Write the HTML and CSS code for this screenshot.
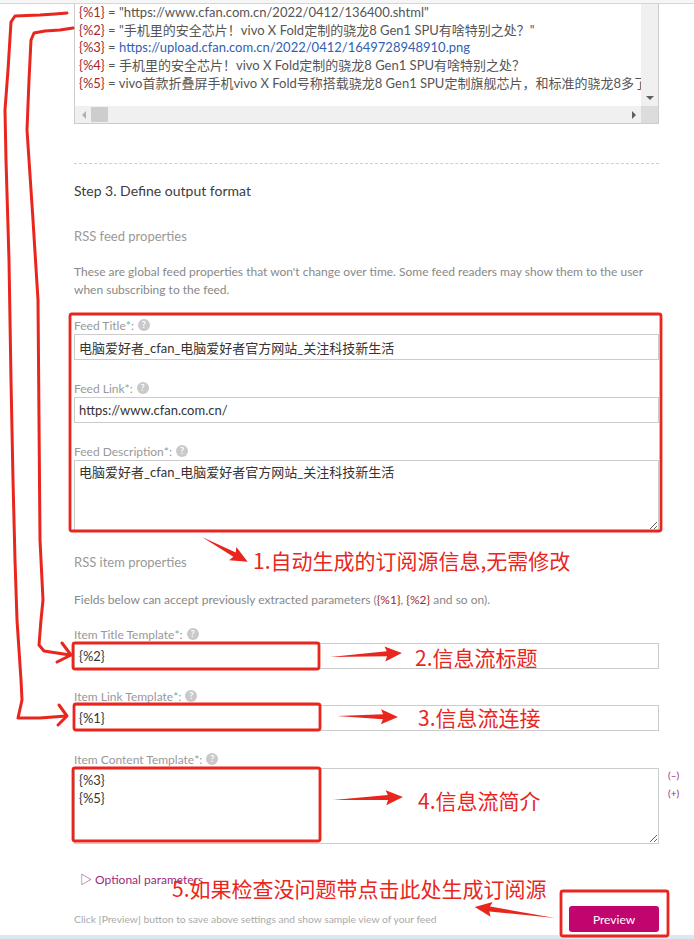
FILE: index.html
```html
<!DOCTYPE html>
<html>
<head>
  <title>Feed setup - Step 3</title>
  <link rel="stylesheet" href="styles.css">
</head>
<body>
  <div class="topbar"></div>

  <div class="wrap">
    <div class="params">
      <div class="params-view">
        <ul class="params-list">
          <li><span class="ph">{%1}</span> = "https://www.cfan.com.cn/2022/0412/136400.shtml"</li>
          <li><span class="ph">{%2}</span> = "手机里的安全芯片！vivo X Fold定制的骁龙8 Gen1 SPU有啥特别之处？"</li>
          <li><span class="ph">{%3}</span> = <a class="url" href="#">https://upload.cfan.com.cn/2022/0412/1649728948910.png</a></li>
          <li><span class="ph">{%4}</span> = 手机里的安全芯片！vivo X Fold定制的骁龙8 Gen1 SPU有啥特别之处？</li>
          <li><span class="ph">{%5}</span> = vivo首款折叠屏手机vivo X Fold号称搭载骁龙8 Gen1 SPU定制旗舰芯片，和标准的骁龙8多了一个SPU安全芯片</li>
        </ul>
      </div>
      <div class="vbar"><span class="tri tri-down"></span></div>
      <div class="hbar">
        <span class="tri tri-left"></span>
        <span class="thumb"></span>
        <span class="tri tri-right"></span>
      </div>
      <div class="corner"></div>
    </div>

    <hr class="sep">

    <h3 class="step">Step 3. Define output format</h3>

    <h4 class="sub">RSS feed properties</h4>
    <p class="note">These are global feed properties that won't change over time. Some feed readers may show them to the user when subscribing to the feed.</p>

    <div class="field first">
      <label class="lbl">Feed Title<span class="req">*</span>:<span class="help">?</span></label>
      <input class="txt" type="text" value="电脑爱好者_cfan_电脑爱好者官方网站_关注科技新生活">
    </div>
    <div class="field">
      <label class="lbl">Feed Link<span class="req">*</span>:<span class="help">?</span></label>
      <input class="txt" type="text" value="https://www.cfan.com.cn/">
    </div>
    <div class="field">
      <label class="lbl">Feed Description<span class="req">*</span>:<span class="help">?</span></label>
      <textarea class="area desc">电脑爱好者_cfan_电脑爱好者官方网站_关注科技新生活</textarea>
    </div>

    <h4 class="sub items">RSS item properties</h4>
    <p class="note tight">Fields below can accept previously extracted parameters (<span class="ph">{%1}</span>, <span class="ph">{%2}</span> and so on).</p>

    <div class="field item-first">
      <label class="lbl">Item Title Template<span class="req">*</span>:<span class="help">?</span></label>
      <input class="txt" type="text" value="{%2}">
    </div>
    <div class="field item-link">
      <label class="lbl">Item Link Template<span class="req">*</span>:<span class="help">?</span></label>
      <input class="txt" type="text" value="{%1}">
    </div>
    <div class="field">
      <label class="lbl">Item Content Template<span class="req">*</span>:<span class="help">?</span></label>
      <div class="tpl-row">
        <textarea class="area content">{%3}
{%5}</textarea>
        <div class="tpl-tools">
          <span>(–)</span>
          <span>(+)</span>
        </div>
      </div>
    </div>

    <div class="optional">&#9655; Optional parameters</div>

    <div class="actions">
      <span class="hint">Click [Preview] button to save above settings and show sample view of your feed</span>
      <button class="btn-preview">Preview</button>
    </div>
  </div>

  <div class="bottombar"></div>

  <!-- annotations drawn over the page -->
  <svg class="marks" width="694" height="939" viewBox="0 0 694 939">
    <g class="lines">
      <polyline points="67,13 55,14 40,15 15,16 11,22 8,70 5,110 6,160 9,260 11,380 13,480 15,560 17,620 21,680 22,700 18,718 40,718 66,716"/>
      <polyline points="59,705 67,716 58,725"/>
      <polyline points="73,28 60,30 45,31 34,33 31,40 29,80 27,130 33,220 38,300 39,420 40,540 43,600 41,620 39,645 44,651 70,655"/>
      <polyline points="62,643 71,655 57,662"/>
    </g>
    <g class="boxes">
      <rect x="70" y="314" width="591" height="217" rx="2"/>
      <rect x="73" y="643" width="246" height="26" rx="2"/>
      <rect x="74" y="704" width="246" height="26" rx="2"/>
      <rect x="73" y="768" width="247" height="73" rx="2"/>
      <rect x="561" y="891" width="107" height="45" rx="2"/>
    </g>
    <g class="arrows">
      <polygon transform="translate(202,537) rotate(28.5)" points="0,0 37,-2.5 35,-7.5 52,0 35,7.5 37,2.5"/>
      <polygon transform="translate(330,657) rotate(-3.2)" points="0,0 57,-2.5 55,-7.5 72,0 55,7.5 57,2.5"/>
      <polygon transform="translate(337,716) rotate(0.9)" points="0,0 46,-2.5 44,-7.5 61,0 44,7.5 46,2.5"/>
      <polygon transform="translate(333,800) rotate(-2.5)" points="0,0 55,-2.5 53,-7.5 70,0 53,7.5 55,2.5"/>
      <polygon transform="translate(555,918) rotate(187.8)" points="0,0 66,-2.5 64,-7.5 81,0 64,7.5 66,2.5"/>
    </g>
    <g class="notes">
      <text x="253" y="560">1.自动生成的订阅源信息,无需修改</text>
      <text x="415" y="657">2.信息流标题</text>
      <text x="418" y="717">3.信息流连接</text>
      <text x="418" y="800">4.信息流简介</text>
      <text x="172" y="888">5.如果检查没问题带点击此处生成订阅源</text>
    </g>
  </svg>
</body>
</html>
```

FILE: styles.css
```css
body {
  margin: 0;
  background: #fff;
  font-family: Lato, "Noto Sans CJK SC", sans-serif;
  color: #555;
  position: relative;
  height: 939px;
  overflow: hidden;
}

.topbar {
  height: 3px;
  background: #f6f6f6;
  border-bottom: 1px solid #d6d6d6;
}

.wrap {
  width: 585px;
  margin-left: 74px;
}

/* Extracted parameters box */
.params {
  height: 119px;
  border: 1px solid #ccc;
  border-top: 0;
  display: grid;
  grid-template-columns: 1fr 17px;
  grid-template-rows: 102px 17px;
  overflow: hidden;
}

.params-view {
  overflow: hidden;
}

.params-list {
  list-style: none;
  margin: 0;
  padding: 0 0 0 4px;
  font-size: 13px;
  line-height: 17.7px;
  white-space: nowrap;
  color: #555;
}

.ph {
  color: #a3262a;
}

.url {
  color: #2f5fb3;
  text-decoration: none;
}

.vbar {
  background: #f0f0f0;
  display: flex;
  flex-direction: column;
  justify-content: flex-end;
  align-items: center;
  padding-bottom: 6px;
}

.hbar {
  background: #f0f0f0;
  display: flex;
  align-items: center;
  padding: 0 5px 0 7px;
}

.corner {
  background: #dcdcdc;
}

.thumb {
  width: 17px;
  height: 15px;
  background: #cdcdcd;
  margin-left: 5px;
}

.tri {
  width: 0;
  height: 0;
}

.tri-down {
  border-left: 4px solid transparent;
  border-right: 4px solid transparent;
  border-top: 4px solid #606060;
}

.tri-left {
  border-top: 4px solid transparent;
  border-bottom: 4px solid transparent;
  border-right: 4px solid #b0b0b0;
}

.tri-right {
  margin-left: auto;
  border-top: 4px solid transparent;
  border-bottom: 4px solid transparent;
  border-left: 4px solid #606060;
}

.sep {
  border: 0;
  border-top: 1px dashed #cfcfcf;
  margin: 39px 0 0;
  height: 0;
}

.step {
  font-size: 14px;
  font-weight: 400;
  color: #3c3c3c;
  line-height: 20px;
  margin: 17px 0 0;
}

.sub {
  font-size: 13px;
  font-weight: 400;
  color: #999;
  line-height: 18px;
  height: 18px;
  margin: 26px 0 0;
}

.sub.items {
  margin-top: 22px;
}

.note {
  font-size: 12px;
  line-height: 18px;
  color: #888;
  margin: 18px 0 0;
}

.note.tight {
  margin-top: 20px;
  height: 18px;
}

/* Form fields */
.field {
  margin-top: 20px;
}

.field.first {
  margin-top: 18px;
}

.field.item-first {
  margin-top: 17px;
}

.field.item-link {
  margin-top: 19px;
}

.lbl {
  display: flex;
  align-items: center;
  height: 16px;
  font-size: 12px;
  color: #999;
  margin-bottom: 1px;
}

.req {
  color: #7aa9ad;
}

.help {
  width: 12px;
  height: 12px;
  margin-left: 4px;
  border-radius: 50%;
  background: #c9c9c9;
  color: #fff;
  font-size: 9px;
  font-weight: bold;
  line-height: 12px;
  text-align: center;
}

.txt,
.area {
  display: block;
  width: 100%;
  box-sizing: border-box;
  border: 1px solid #ccc;
  border-radius: 0;
  font-family: Lato, "Noto Sans CJK SC", sans-serif;
  font-size: 13px;
  color: #333;
  background: #fff;
  margin: 0;
  outline: none;
}

.txt {
  height: 26px;
  padding: 0 4px;
}

.area {
  padding: 2px 4px;
  line-height: 18px;
  resize: both;
}

.area.desc {
  height: 71px;
}

.tpl-row {
  display: flex;
  align-items: flex-start;
  height: 76px;
  margin-right: -30px;
}

.area.content {
  flex: 0 0 585px;
  height: 76px;
}

.tpl-tools {
  display: flex;
  flex-direction: column;
  margin: -2px 0 0 9px;
  font-size: 10px;
  line-height: 18px;
  color: #a0287a;
}

.optional {
  margin-top: 27px;
  padding-left: 6px;
  font-size: 12px;
  line-height: 18px;
  height: 18px;
  color: #9c2a7a;
}

.actions {
  margin-top: 17px;
  height: 26px;
  display: flex;
  justify-content: space-between;
  align-items: center;
}

.hint {
  font-size: 10.3px;
  color: #aaa;
}

.btn-preview {
  width: 90px;
  height: 26px;
  background: #c0066e;
  color: #fff;
  border: 0;
  border-radius: 3px;
  font-family: Lato, sans-serif;
  font-size: 12px;
  cursor: pointer;
}

.bottombar {
  margin-top: 3px;
  height: 10px;
  background: #dde7ef;
}

/* Annotation layer */
.marks {
  position: absolute;
  top: 0;
  left: 0;
  pointer-events: none;
}

.marks .lines polyline {
  fill: none;
  stroke: #e8261e;
  stroke-width: 3;
  stroke-linejoin: round;
  stroke-linecap: round;
}

.marks .boxes rect {
  fill: none;
  stroke: #e8261e;
  stroke-width: 2.8;
}

.marks .arrows polygon {
  fill: #e8261e;
}

.marks .notes text {
  font-family: "Noto Sans CJK SC", sans-serif;
  font-size: 21px;
  fill: #e8261e;
  dominant-baseline: central;
}
```
